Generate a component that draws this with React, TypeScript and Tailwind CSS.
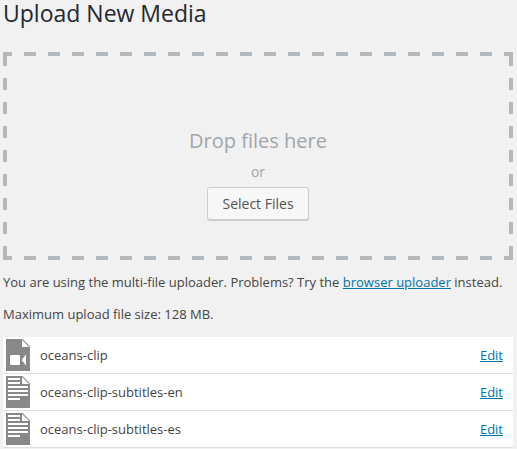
type Kind = "video" | "text";

const files: { name: string; kind: Kind }[] = [
  { name: "oceans-clip", kind: "video" },
  { name: "oceans-clip-subtitles-en", kind: "text" },
  { name: "oceans-clip-subtitles-es", kind: "text" },
];

function FileIcon({ kind }: { kind: Kind }) {
  return (
    <svg width="24" height="32" viewBox="0 0 24 32" className="block shrink-0" aria-hidden="true">
      <path d="M0 0h16.500L24 7.500V32H0z" fill="#888" />
      <path d="M16 1v7h7z" fill="#fff" />
      {kind === "video" ? (
        <g fill="#fff">
          <rect x="4" y="16" width="10" height="10" rx="1.2" />
          <path d="M20 16v10h-.5L16 21.6v-1.2l3.5-4.4z" />
        </g>
      ) : (
        <path d="M2 2h12v2H2zM2 6h12v2H2zM2 10h20v2H2zM2 14h20v2H2zM2 18h20v2H2zM2 22h12v2H2z" fill="#fff" />
      )}
    </svg>
  );
}

export default function App() {
  return (
    <main className="h-[449px] w-[517px] overflow-hidden bg-[#f1f1f1] pr-1 pl-[3px] font-['Open_Sans',sans-serif] text-[13px] leading-5 text-[#444]">
      <h1 className="h-[52px] text-[23px] leading-[27px] font-normal text-[#23282d]">Upload New Media</h1>

      {/* Dashed drop zone: one repeating gradient for each edge */}
      <section className="flex h-[208px] flex-col items-center bg-[image:repeating-linear-gradient(90deg,#b4b9be_0_9px,transparent_9px_21px,#b4b9be_21px_24px),repeating-linear-gradient(90deg,#b4b9be_0_9px,transparent_9px_21px,#b4b9be_21px_24px),repeating-linear-gradient(180deg,transparent_0_2px,#b4b9be_2px_14px,transparent_14px_24px),repeating-linear-gradient(180deg,transparent_0_2px,#b4b9be_2px_14px,transparent_14px_24px)] bg-[size:100%_4px,100%_4px,4px_100%,4px_100%] bg-[position:left_top,left_bottom,left_top,right_top] bg-no-repeat pt-[74px]">
        <p className="text-[20px] leading-[30px] text-[#a0a5aa]">Drop files here</p>
        <p className="mt-[5px] text-[14px] leading-[21px] text-[#a0a5aa]">or</p>
        <button className="mt-[5px] h-[33px] w-[102px] rounded-[3px] border border-[#ccc] bg-[#f7f7f7] text-[14px] text-[#555] shadow-[0_1px_0_#ccc]">
          Select Files
        </button>
      </section>

      <p className="mt-3 whitespace-nowrap">
        You are using the multi-file uploader. Problems? Try the{" "}
        <a className="text-[#0073aa] underline">browser uploader</a> instead.
      </p>
      <p className="mt-3">Maximum upload file size: 128 MB.</p>

      <ul className="mt-[13px]">
        {files.map((f) => (
          <li key={f.name} className="flex h-[37px] items-center border-b border-[#dfdfdf] bg-white pr-[10px] pl-[3px]">
            <FileIcon kind={f.kind} />
            <span className="ml-[10px] flex-1">{f.name}</span>
            <a className="text-[#0073aa] underline">Edit</a>
          </li>
        ))}
      </ul>
    </main>
  );
}
